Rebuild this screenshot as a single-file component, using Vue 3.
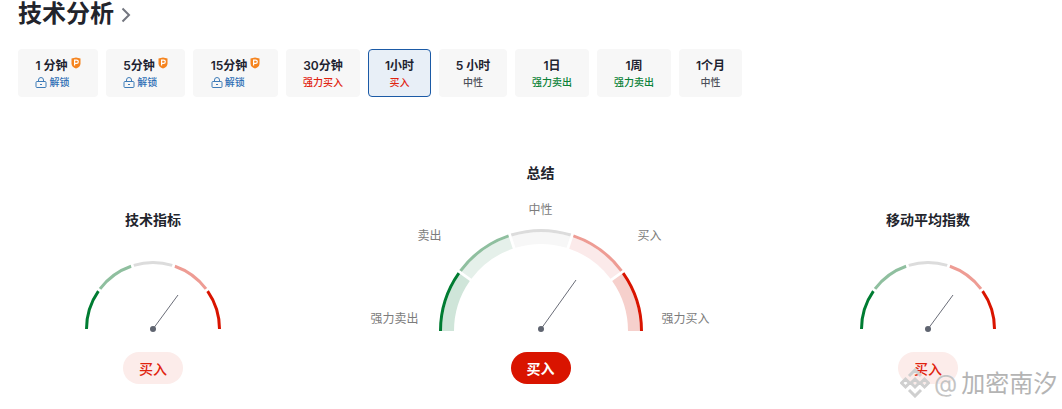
<template>
  <div class="page">
    <div class="head">
      <h2>技术分析</h2>
      <svg class="chevron" width="10" height="16" viewBox="0 0 10 16"><path d="M1.500 1.500 8 8l-6.500 6.500" fill="none" stroke="#73767f" stroke-width="2" /></svg>
    </div>

    <div class="tabs">
      <div v-for="t in tabs" :key="t.name" class="tab" :class="{ active: t.active }" :style="{ width: t.w + 'px' }">
        <div v-if="t.locked" class="tab-inner">
          <div class="tab-name">
            {{ t.name }}
            <svg class="pro" width="10" height="12" viewBox="0 0 10 12">
              <path d="M0.500 1.500 5 0.500l4.500 1v5.200C9.500 9 7.500 10.500 5 11.500 2.500 10.500 0.500 9 0.500 6.700z" fill="#f5841f" />
              <path d="M3.600 8.500V3.200h2c1.100 0 1.700.6 1.700 1.500S6.700 6.300 5.600 6.300H3.600" fill="none" stroke="#fff" stroke-width="1.200" />
            </svg>
          </div>
          <div class="tab-sub unlock">
            <svg width="12" height="11" viewBox="0 0 12 11" fill="none" stroke="#3f7cb8" stroke-width="1">
              <rect x="1" y="4.500" width="10" height="6" rx="1" />
              <path d="M3.500 4.500V3a2.500 2.500 0 0 1 5 0v1.500M5 7.500h2" />
            </svg>
            解锁
          </div>
        </div>
        <template v-else>
          <div class="tab-name">{{ t.name }}</div>
          <div class="tab-sub" :class="t.tone">{{ t.sub }}</div>
        </template>
      </div>
    </div>

    <div class="gauges">
      <div v-for="g in gauges" :key="g.title" class="gauge" :class="{ big: g.big }">
        <div class="gauge-title">{{ g.title }}</div>
        <div class="dial" :style="{ width: g.box + 'px', height: g.h + 'px' }">
          <svg :width="g.box" :height="g.h" :viewBox="`0 0 ${g.box} ${g.h}`">
            <template v-for="(s, i) in segments" :key="i">
              <path v-if="g.big" :d="arc(g, i, 87, 99)" :fill="s.band" />
              <path :d="arc(g, i, g.r - 3, g.r)" :fill="s.line" />
            </template>
            <line :x1="g.box / 2" :y1="g.h - g.drop" :x2="g.box / 2 + g.tip[0]" :y2="g.h - g.drop - g.tip[1]" stroke="#6a6d78" stroke-width="1" />
            <circle :cx="g.box / 2" :cy="g.h - g.drop" r="3" fill="#5f6470" />
          </svg>
          <template v-if="g.big">
            <span class="mark m-ssell">强力卖出</span>
            <span class="mark m-sell">卖出</span>
            <span class="mark m-neutral">中性</span>
            <span class="mark m-buy">买入</span>
            <span class="mark m-sbuy">强力买入</span>
          </template>
        </div>
        <div class="pill" :class="{ solid: g.big }">买入</div>
      </div>
    </div>

    <div class="watermark">
      <svg width="30" height="30" viewBox="0 0 30 30" fill="none" stroke="#cfcfcf" stroke-width="3">
        <path d="M9 8 15 2l6 6M1.500 15 5.500 11l4 4-4 4zM20.500 15l4-4 4 4-4 4zM11 15l4-4 4 4-4 4zM9 22l6 6 6-6" />
      </svg>
      <span class="at">@</span>
      <span class="wm-name">加密南汐</span>
    </div>
  </div>
</template>

<script setup>
const tabs = [
  { name: '1 分钟', locked: true, w: 80 },
  { name: '5分钟', locked: true, w: 79 },
  { name: '15分钟', locked: true, w: 85 },
  { name: '30分钟', sub: '强力买入', tone: 'red', w: 74 },
  { name: '1小时', sub: '买入', tone: 'red', active: true, w: 63 },
  { name: '5 小时', sub: '中性', tone: 'grey', w: 68 },
  { name: '1日', sub: '强力卖出', tone: 'green', w: 74 },
  { name: '1周', sub: '强力卖出', tone: 'green', w: 74 },
  { name: '1个月', sub: '中性', tone: 'grey', w: 63 }
]

const segments = [
  { line: '#007c32', band: '#cfe5d9' },
  { line: '#8fbf9f', band: '#e5f0ea' },
  { line: '#dcdcdc', band: '#f7f7f7' },
  { line: '#ee9c94', band: '#fbeaea' },
  { line: '#d91400', band: '#f6d0cc' }
]

const gauges = [
  { title: '技术指标', r: 68, box: 136, h: 68, drop: 0, tip: [25, 34] },
  { title: '总结', big: true, r: 102, box: 204, h: 102, drop: 2, tip: [35, 49] },
  { title: '移动平均指数', r: 68, box: 136, h: 68, drop: 0, tip: [25, 34] }
]

// one fifth of the half circle, with a small gap between the pieces
function arc(g, i, inner, outer) {
  const cx = g.box / 2
  const cy = g.h
  const gapO = 1.4 / outer
  const gapI = 1.4 / inner
  const a0 = Math.PI - (i * Math.PI) / 5
  const a1 = Math.PI - ((i + 1) * Math.PI) / 5
  const p = (r, a) => `${(cx + r * Math.cos(a)).toFixed(2)} ${(cy - r * Math.sin(a)).toFixed(2)}`
  const s0 = i === 0 ? 0 : 1
  const s1 = i === 4 ? 0 : 1
  return `M${p(outer, a0 - gapO * s0)} A${outer} ${outer} 0 0 1 ${p(outer, a1 + gapO * s1)} L${p(inner, a1 + gapI * s1)} A${inner} ${inner} 0 0 0 ${p(inner, a0 - gapI * s0)}Z`
}
</script>

<style>
body { background: #fff; overflow: hidden; }
</style>

<style scoped>
.page {
  position: relative;
  width: 1062px;
  height: 409px;
  overflow: hidden;
  padding-left: 18px;
  padding-top: 1px;
  box-sizing: border-box;
  font-family: Inter, "Noto Sans CJK SC", sans-serif;
  color: #1e2330;
}
.head { display: flex; align-items: center; gap: 7px; height: 25px; }
.head h2 { margin: 0; font-size: 24px; line-height: 25px; font-weight: 600; color: #22242c; }
.chevron { margin-top: 3px; }
.tabs { display: flex; gap: 8px; margin-top: 23px; }
.tab {
  height: 48px;
  box-sizing: border-box;
  background: #f7f7f7;
  border-radius: 4px;
  display: flex;
  flex-direction: column;
  align-items: center;
  padding-top: 8px;
}
.tab.active { background: #e8eff7; border: 1px solid #1b5aa6; padding-top: 7px; }
.tab-inner { display: flex; flex-direction: column; align-items: flex-start; }
.tab-name { font-size: 12px; line-height: 17px; font-weight: 600; white-space: nowrap; display: flex; gap: 3px; }
.pro { margin-top: 0; }
.tab-sub { font-size: 10px; line-height: 14px; margin-top: 1px; font-weight: 500; white-space: nowrap; }
.unlock { color: #2f6fb5; display: flex; align-items: center; gap: 2px; }
.red { color: #e0230f; }
.green { color: #0b8238; }
.grey { color: #4c4f59; }
.gauges {
  position: absolute;
  left: 18px;
  top: 163px;
  width: 1045px;
  height: 221px;
  display: flex;
  justify-content: space-between;
  align-items: flex-end;
}
.gauge { width: 270px; display: flex; flex-direction: column; align-items: center; }
.gauge-title { font-size: 14px; line-height: 18px; font-weight: 600; color: #22242c; margin-bottom: 32px; }
.gauge.big .gauge-title { margin-bottom: 47px; }
.dial { position: relative; }
.dial svg { display: block; overflow: visible; }
.pill {
  width: 60px;
  height: 32px;
  margin-top: 23px;
  border-radius: 16px;
  background: #fcecea;
  color: #e0230f;
  font-size: 14px;
  font-weight: 500;
  display: flex;
  align-items: center;
  justify-content: center;
}
.gauge.big .pill { margin-top: 21px; background: #d91400; color: #fff; font-weight: 600; }
.mark { position: absolute; font-size: 12px; line-height: 16px; color: #7c7c7c; white-space: nowrap; }
.m-ssell { left: -68px; top: 82px; }
.m-sell { left: -21px; top: -1px; }
.m-neutral { left: 90px; top: -27px; }
.m-buy { left: 199px; top: -1px; }
.m-sbuy { left: 223px; top: 82px; }
.watermark {
  position: absolute;
  left: 900px;
  top: 367px;
  display: flex;
  align-items: center;
  gap: 4px;
  color: #b4b4b4;
  font-size: 24px;
  line-height: 30px;
  text-shadow: 0 0 1px #fff;
  white-space: nowrap;
}
.at { color: #c4c4c4; margin-top: 2px; }
.wm-name { margin-top: 2px; }
</style>
